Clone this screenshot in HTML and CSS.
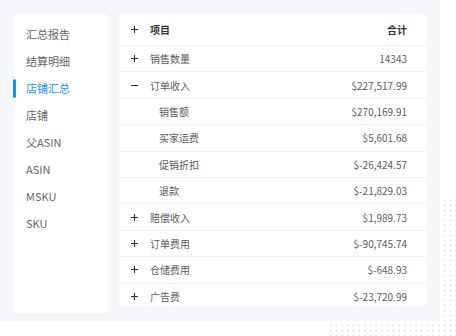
FILE: index.html
```html
<!DOCTYPE html>
<html lang="zh-CN">
<head>
    <meta charset="UTF-8">
    <meta name="viewport" content="width=device-width, initial-scale=1.0">
    <title>店铺汇总</title>
    <link rel="stylesheet" href="styles.css">
</head>
<body>
    <div class="stage">
        <div class="dots"></div>

        <div class="panel">
            <ul class="side-menu">
                <li>汇总报告</li>
                <li>结算明细</li>
                <li class="active">店铺汇总</li>
                <li>店铺</li>
                <li>父ASIN</li>
                <li>ASIN</li>
                <li>MSKU</li>
                <li>SKU</li>
            </ul>

            <div class="table-card">
                <div class="row head">
                    <svg class="toggle" viewBox="0 0 8 8"><path d="M0 4H8M4 0V8"/></svg>
                    <span class="name">项目</span>
                    <span class="amount">合计</span>
                </div>
                <div class="row">
                    <svg class="toggle" viewBox="0 0 8 8"><path d="M0 4H8M4 0V8"/></svg>
                    <span class="name">销售数量</span>
                    <span class="amount">14343</span>
                </div>
                <div class="row">
                    <svg class="toggle" viewBox="0 0 8 8"><path d="M0 4H8"/></svg>
                    <span class="name">订单收入</span>
                    <span class="amount">$227,517.99</span>
                </div>
                <div class="row sub">
                    <span class="name">销售额</span>
                    <span class="amount">$270,169.91</span>
                </div>
                <div class="row sub">
                    <span class="name">买家运费</span>
                    <span class="amount">$5,601.68</span>
                </div>
                <div class="row sub">
                    <span class="name">促销折扣</span>
                    <span class="amount">$-26,424.57</span>
                </div>
                <div class="row sub">
                    <span class="name">退款</span>
                    <span class="amount">$-21,829.03</span>
                </div>
                <div class="row">
                    <svg class="toggle" viewBox="0 0 8 8"><path d="M0 4H8M4 0V8"/></svg>
                    <span class="name">赔偿收入</span>
                    <span class="amount">$1,989.73</span>
                </div>
                <div class="row">
                    <svg class="toggle" viewBox="0 0 8 8"><path d="M0 4H8M4 0V8"/></svg>
                    <span class="name">订单费用</span>
                    <span class="amount">$-90,745.74</span>
                </div>
                <div class="row">
                    <svg class="toggle" viewBox="0 0 8 8"><path d="M0 4H8M4 0V8"/></svg>
                    <span class="name">仓储费用</span>
                    <span class="amount">$-648.93</span>
                </div>
                <div class="row">
                    <svg class="toggle" viewBox="0 0 8 8"><path d="M0 4H8M4 0V8"/></svg>
                    <span class="name">广告费</span>
                    <span class="amount">$-23,720.99</span>
                </div>
            </div>
        </div>
    </div>
</body>
</html>
```

FILE: styles.css
```css
body {
    margin: 0;
    background-color: #ffffff;
    font-family: "Noto Sans CJK SC", "Noto Sans", sans-serif;
}
.stage {
    position: relative;
    width: 456px;
    height: 336px;
    overflow: hidden;
}
/* decorative dot grid behind the panel */
.dots {
    position: absolute;
    left: 328px;
    top: 198px;
    width: 128px;
    height: 138px;
    background-image: radial-gradient(circle, #dfe5ee 0.9px, transparent 1.2px);
    background-size: 5.7px 5px;
}
.panel {
    position: relative;
    width: 440px;
    height: 321px;
    box-sizing: border-box;
    padding: 14px;
    display: flex;
    gap: 11px;
    background-color: #f5f7fa;
}
.side-menu {
    position: relative;
    width: 94px;
    height: 292px;
    margin: 0;
    padding: 7px 0 0;
    list-style: none;
    background-color: white;
    border-radius: 4px;
}
.side-menu li {
    position: relative;
    height: 27px;
    line-height: 27px;
    padding-left: 12px;
    font-size: 11px;
    color: #666666;
}
.side-menu li.active {
    color: #1890ff;
}
.side-menu li.active::before {
    content: "";
    position: absolute;
    left: -1px;
    top: 4px;
    width: 3px;
    height: 19px;
    border-radius: 2px;
    background-color: #1890ff;
}
.table-card {
    width: 307px;
    height: 292px;
    overflow: hidden;
    background-color: white;
    border-radius: 4px;
}
.row {
    display: flex;
    align-items: center;
    height: 26.4px;
    box-sizing: border-box;
    padding: 0 19px 0 12px;
    border-top: 1px solid #f0f0f0;
    font-size: 10px;
    color: #5c5c5c;
}
.row.head {
    height: 31px;
    border-top: none;
    font-weight: bold;
    color: #333333;
}
.row.sub {
    padding-left: 40px;
}
.toggle {
    width: 7px;
    height: 7px;
    margin-right: 12px;
    fill: none;
    stroke: #333333;
    stroke-width: 1.3;
}
.name {
    flex: 1;
}
```
